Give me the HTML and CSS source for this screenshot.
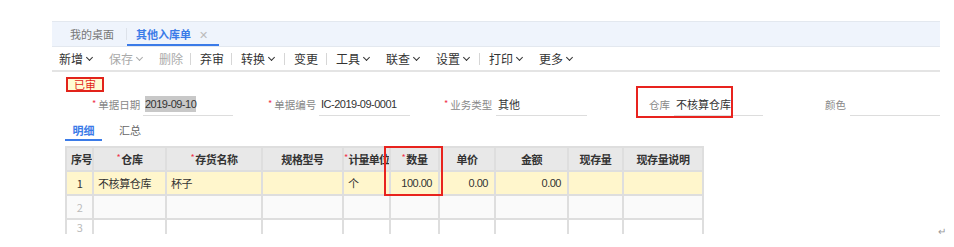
FILE: index.html
```html
<!DOCTYPE html>
<html lang="zh">
<head>
<meta charset="utf-8">
<link rel="stylesheet" href="styles.css">
</head>
<body>
<div class="app">
  <div class="tabbar">
    <span class="tab">我的桌面</span>
    <span class="tab-sep"></span>
    <span class="tab active">其他入库单<span class="close">✕</span></span>
  </div>
  <div class="toolbar">
    <span class="tb w50">新增<i class="chev"></i></span>
    <span class="tb w50 dis">保存<i class="chev"></i></span>
    <span class="tb w31 dis">删除</span>
    <span class="sep"></span>
    <span class="tb w31">弃审</span>
    <span class="sep"></span>
    <span class="tb w43">转换<i class="chev"></i></span>
    <span class="sep"></span>
    <span class="tb w32">变更</span>
    <span class="sep"></span>
    <span class="tb w50">工具<i class="chev"></i></span>
    <span class="tb w50">联查<i class="chev"></i></span>
    <span class="tb w43">设置<i class="chev"></i></span>
    <span class="sep"></span>
    <span class="tb w50">打印<i class="chev"></i></span>
    <span class="tb w50">更多<i class="chev"></i></span>
  </div>
  <div class="status-row"><span class="badge">已审</span></div>
  <div class="form-row">
    <div class="field f1"><span class="lbl"><b class="req">*</b>单据日期</span><span class="val num"><span class="sel">2019-09-10</span></span></div>
    <div class="field f2"><span class="lbl"><b class="req">*</b>单据编号</span><span class="val num">IC-2019-09-0001</span></div>
    <div class="field f3"><span class="lbl"><b class="req">*</b>业务类型</span><span class="val">其他</span></div>
    <div class="field f4"><span class="lbl">仓库</span><span class="val">不核算仓库</span><span class="hl"></span></div>
    <div class="field f5"><span class="lbl">颜色</span><span class="val"></span></div>
  </div>
  <div class="subtabs">
    <span class="st active">明细</span>
    <span class="st">汇总</span>
  </div>
  <div class="grid-wrap">
    <table class="grid">
      <colgroup>
        <col style="width:27px"><col style="width:73px"><col style="width:96px"><col style="width:81px"><col style="width:47px"><col style="width:49px"><col style="width:56px"><col style="width:73px"><col style="width:55px"><col style="width:80px">
      </colgroup>
      <thead>
        <tr><th>序号</th><th><b class="req">*</b>仓库</th><th><b class="req">*</b>存货名称</th><th>规格型号</th><th class="tight"><b class="req">*</b>计量单位</th><th><b class="req">*</b>数量</th><th>单价</th><th>金额</th><th>现存量</th><th>现存量说明</th></tr>
      </thead>
      <tbody>
        <tr class="r1"><td class="c">1</td><td>不核算仓库</td><td>杯子</td><td></td><td>个</td><td class="n">100.00</td><td class="n">0.00</td><td class="n">0.00</td><td></td><td></td></tr>
        <tr class="r2"><td class="c">2</td><td></td><td></td><td></td><td></td><td></td><td></td><td></td><td></td><td></td></tr>
        <tr class="r3"><td class="c">3</td><td></td><td></td><td></td><td></td><td></td><td></td><td></td><td></td><td></td></tr>
      </tbody>
    </table>
    <span class="qty-hl"></span>
  </div>
</div>
<span class="ret">↵</span>
</body>
</html>
```
FILE: styles.css
```css
* { box-sizing: border-box; }
html, body { margin: 0; padding: 0; background: #fff; }
body {
  width: 954px; height: 247px; overflow: hidden; position: relative;
  font-family: "Microsoft YaHei", "Noto Sans CJK SC", "Liberation Sans", sans-serif;
  font-size: 12px; line-height: 16px; color: #333;
}
.app { margin: 21px 0 0 52px; width: 888px; }

/* top tab bar */
.tabbar {
  height: 26px; background: #eff4fc;
  border-top: 1px solid #e3e8ef; border-bottom: 1px solid #e3e8ef;
  display: flex; align-items: stretch; padding-left: 18px;
}
.tab { display: flex; align-items: center; color: #777; font-size: 11px; white-space: nowrap; }
.tab-sep { width: 1px; background: #dde2ea; margin: 6px 0 6px 12px; }
.tab.active {
  color: #3b7be8; font-weight: bold; padding: 2px 0 0 9px; width: 92px;
  border-bottom: 2px solid #3b7be8;
}
.close { color: #bbb; font-weight: normal; margin-left: 8px; font-size: 11px; }

/* toolbar */
.toolbar {
  height: 25px; display: flex; align-items: center; padding-left: 7px;
  border-bottom: 2px solid #e4e4e4;
}
.tb { display: flex; align-items: center; color: #333; white-space: nowrap; flex: none; }
.w50 { width: 50px; } .w43 { width: 43px; } .w31 { width: 31px; } .w32 { width: 32px; }
.tb.dis { color: #aaa; }
.chev {
  width: 5px; height: 5px; border-right: 1.6px solid currentColor; border-bottom: 1.6px solid currentColor;
  transform: rotate(45deg); margin: -3px 0 0 4px; display: inline-block;
}
.sep { width: 1px; height: 12px; background: #d6d6d6; margin-right: 9px; flex: none; }

/* status */
.status-row { height: 22px; padding: 5px 0 0 14px; }
.badge {
  display: flex; align-items: center; justify-content: center;
  width: 38px; height: 15px; border: 2px solid #e2231a; background: #fffbd3;
  color: #e2231a; font-size: 11px; line-height: 11px;
}

/* form */
.form-row { height: 22px; display: flex; align-items: stretch; }
.field { display: flex; align-items: stretch; position: relative; flex: none; }
.lbl { color: #888; font-size: 10.5px; white-space: nowrap; display: flex; align-items: center; }
.req { color: #f0334b; font-weight: normal; font-size: 9px; line-height: 9px; }
.lbl .req { margin-right: 2px; margin-top: -3px; }
.val {
  display: flex; align-items: center; border-bottom: 1px solid #ddd;
  color: #333; padding-left: 2px; white-space: nowrap; font-size: 11px; padding-bottom: 1px;
}
.val.num { font-family: "Liberation Sans", sans-serif; letter-spacing: -0.5px; font-size: 11px; }
.sel { background: #c8c8c8; }
.f1 { margin-left: 40px; } .f1 .lbl { width: 51px; } .f1 .val { width: 90px; }
.f2 { margin-left: 35px; } .f2 .lbl { width: 51px; } .f2 .val { width: 91px; }
.f3 { margin-left: 34px; } .f3 .lbl { width: 52px; } .f3 .val { width: 91px; }
.f4 { margin-left: 62px; } .f4 .lbl { width: 25px; } .f4 .val { width: 89px; }
.f5 { margin-left: 62px; } .f5 .lbl { width: 25px; } .f5 .val { width: 90px; }
.f4 .hl { position: absolute; left: -13px; top: -8px; width: 97px; height: 32px; border: 2px solid #e8231e; }

/* sub tabs */
.subtabs { height: 30px; display: flex; align-items: flex-start; padding: 6px 0 0 13px; }
.st { color: #666; font-size: 11px; line-height: 17px; height: 19px; text-align: center; }
.st.active { color: #3b7be8; font-weight: bold; border-bottom: 2px solid #3b7be8; width: 37px; margin-right: 17px; }

/* grid */
.grid-wrap { position: relative; padding-left: 13px; }
.grid { border-collapse: collapse; table-layout: fixed; width: 637px; }
.grid th, .grid td {
  border: 2px solid #dedede; height: 24px; padding: 0 4px; font-size: 11px; line-height: 14px;
  white-space: nowrap; overflow: hidden; letter-spacing: -0.4px;
}
.grid th { background: #e8e8e8; color: #333; font-weight: bold; text-align: center; }
.grid th .req { margin-right: 1px; vertical-align: 3px; }
.grid th.tight { padding: 0; text-align: left; letter-spacing: -0.8px; }
.grid td { color: #333; }
.grid td.c { text-align: center; color: #bbb; padding: 0; }
.grid td.n { text-align: right; font-family: "Liberation Sans", sans-serif; padding-right: 6px; letter-spacing: -0.5px; }
.r1 td { background: #fff6cc; }
.r1 td.c { color: #333; }
.r2 td { background: #fafafa; }
.grid .r3 td { background: #fff; vertical-align: top; height: 15px; border-bottom: none; padding-top: 1px; line-height: 13px; }
.qty-hl { position: absolute; left: 332px; top: 0; width: 59px; height: 50px; border: 2px solid #e8231e; }

.ret { position: absolute; left: 938px; top: 223px; color: #999; font-size: 10px; }
```
